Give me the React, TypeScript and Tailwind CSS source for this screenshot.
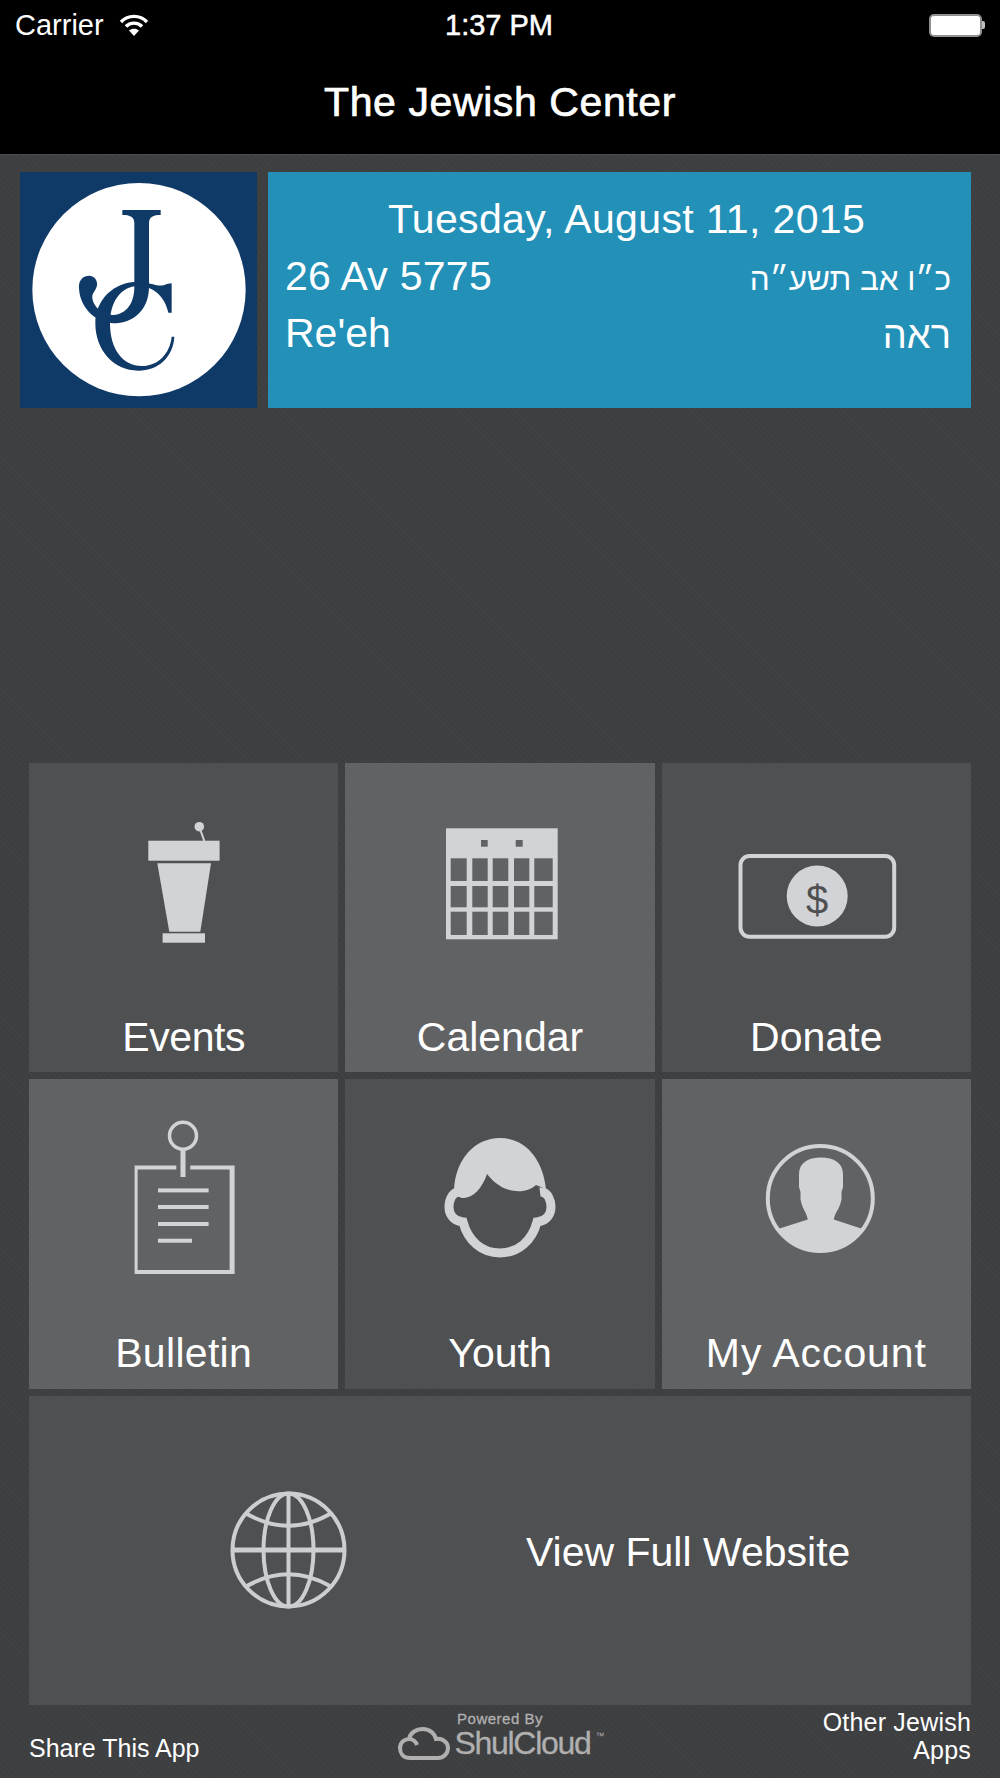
const ICON = "#d2d3d7";
const DARK = "#4f5052";
const LIGHT = "#616264";

function Podium() {
  return (
    <svg width="200" height="160" viewBox="0 0 200 160" fill={ICON}>
      <circle cx="115.3" cy="23.7" r="4.8" />
      <path d="M115.3 24 L120.3 38" stroke={ICON} strokeWidth="2" fill="none" />
      <rect x="64.3" y="37.7" width="71.3" height="20" />
      <path d="M73.3 60.3 H127 L116.3 128.7 H85.3 Z" />
      <rect x="78.6" y="130.3" width="42.4" height="9.4" />
    </svg>
  );
}

function CalendarIcon() {
  const xs = [[20.7, 16], [42.3, 15.4], [62.7, 15.6], [84, 15.3], [104.3, 18.4]];
  const ys = [[55.3, 22.7], [83, 21.3], [108.7, 23.3]];
  return (
    <svg width="200" height="160" viewBox="0 0 200 160">
      <g transform="translate(30 0)">
        <rect x="16" y="25.3" width="111.7" height="111" fill={ICON} />
        <rect x="51" y="37" width="6.7" height="6.7" fill={LIGHT} />
        <rect x="85.7" y="37" width="7" height="6.7" fill={LIGHT} />
        {ys.map(([y, h]) =>
          xs.map(([x, w]) => <rect key={`${x}-${y}`} x={x} y={y} width={w} height={h} fill={LIGHT} />),
        )}
      </g>
    </svg>
  );
}

function Bill() {
  return (
    <svg width="200" height="160" viewBox="0 0 200 160">
      <rect x="24.5" y="53" width="153.7" height="80.7" rx="9" fill="none" stroke={ICON} strokeWidth="4" />
      <circle cx="101.2" cy="93" r="30.5" fill={ICON} />
      <text x="101.2" y="111" textAnchor="middle" fontSize="40" fill={DARK} fontFamily="'Liberation Sans', sans-serif">
        $
      </text>
    </svg>
  );
}

function BulletinIcon() {
  return (
    <svg width="200" height="160" viewBox="0 0 200 160" fill={ICON}>
      <circle cx="99" cy="16.7" r="13.5" fill="none" stroke={ICON} strokeWidth="3.5" />
      <rect x="96.5" y="30" width="5" height="28" />
      <path d="M92.3 46.4 H50.6 V155 H150.6 V46.4 H106.3 V50.4 H145.6 V151 H53.6 V50.4 H92.3 Z" fillRule="evenodd" />
      <rect x="74" y="69.4" width="50.6" height="4" />
      <rect x="74" y="86" width="50.6" height="4" />
      <rect x="74" y="103" width="50.6" height="4" />
      <rect x="74" y="119.7" width="34" height="4" />
    </svg>
  );
}

function Face() {
  return (
    <svg width="200" height="160" viewBox="0 0 200 160">
      <path
        d="M60 73 C52 72 49 82 49 88 C49 96 54 102 63 103 C68 122 82 134 100 134 C118 134 132 122 137 103 C146 102 151 96 151 88 C151 82 148 72 140 73"
        fill="none"
        stroke={ICON}
        strokeWidth="9"
      />
      <path
        d="M54 72 C55 40 75 19 100 19 C125 19 143 40 146 70 L136 66 C128 74 105 78 87 55 C82 70 72 80 62 79 C58 78 55 76 54 72 Z"
        fill={ICON}
      />
    </svg>
  );
}

function Person() {
  return (
    <svg width="200" height="160" viewBox="0 0 200 160">
      <circle cx="104.3" cy="79.5" r="52.5" fill="none" stroke={ICON} strokeWidth="4" />
      <path
        d="M62 110 L91.8 100.5 C90.5 93 86 90 84.5 80 L84.5 73 L83 68 L83 55 C83 44 92 38.4 104.8 38.4 C118 38.4 127 44 127 55 L127 68 L125.5 73 L125.5 80 C124 90 119 93 117.8 100.5 L146.6 110 A52.7 52.7 0 0 1 62 110 Z"
        fill={ICON}
      />
    </svg>
  );
}

function Globe() {
  return (
    <svg width="120" height="120" viewBox="0 0 120 120" fill="none" stroke="#cdced1" strokeWidth="4">
      <ellipse cx="60.5" cy="60" rx="56" ry="56.5" />
      <ellipse cx="60.5" cy="60" rx="25" ry="56.5" />
      <path d="M60.5 3.5 V116.5" />
      <path d="M4.5 60 H116.5" strokeWidth="5" />
      <path d="M19 24 Q60.5 47.5 102 24" />
      <path d="M19 96 Q60.5 72.5 102 96" />
    </svg>
  );
}

function Logo() {
  return (
    <svg width="237" height="236" viewBox="30 36 711 708" className="shrink-0" role="img" aria-label="JC logo">
      <rect x="30" y="36" width="711" height="708" fill="#0f3a68" />
      <circle cx="387" cy="389" r="320" fill="#ffffff" />
      <path
        d="M337 150 L452 150 L452 165 C430 165 417 170 417 190 L417 380 C417 450 370 490 310 490 C265 490 210 450 207 385 C205 360 220 347 237 347 C255 347 265 365 260 380 C255 395 245 400 247 415 C250 435 265 450 280 458 L305 465 C340 465 373 440 373 380 L373 190 C373 170 360 165 337 165 Z"
        fill="#0f3a68"
      />
      <path
        d="M470 372 L485 370 L485 458 L475 458 C465 410 430 378 385 378 C330 378 300 430 300 490 C300 570 340 618 395 618 C445 618 480 580 485 530 L493 530 C490 590 445 632 385 632 C310 632 256 570 256 490 C256 420 310 365 385 365 C420 365 445 385 470 372 Z"
        fill="#0f3a68"
      />
    </svg>
  );
}

function Tile({
  label,
  light,
  labelClass,
  children,
}: {
  label: string;
  light?: boolean;
  labelClass: string;
  children: React.ReactNode;
}) {
  return (
    <div className={`flex flex-col items-center pt-[40px] pb-[12.5px] ${light ? "bg-[#616264]" : "bg-[#4f5052]"}`}>
      {children}
      <div className={`mt-auto text-[41px] leading-[46px] text-white ${labelClass}`}>{label}</div>
    </div>
  );
}

export default function App() {
  return (
    <div className="flex h-[1778px] w-[1000px] flex-col overflow-hidden bg-[#3e3f41] bg-[repeating-linear-gradient(45deg,#3d3e40_0px,#3d3e40_2px,#404143_2px,#404143_4px)] font-['Liberation_Sans',sans-serif] text-white">
      <header className="h-[155px] shrink-0 border-b border-[#4c4d4f] bg-black">
        <div className="relative flex h-[50px] items-center justify-between pl-[15px] pr-[15px]">
          <div className="flex items-center gap-[15px]">
            <span className="text-[29px] leading-[34px]">Carrier</span>
            <svg width="30" height="22" viewBox="0 0 30 22" fill="none" stroke="#ffffff" strokeWidth="3.4">
              <path d="M2 8 C9 0.5 21 0.5 28 8" />
              <path d="M7 12.5 C11 8 19 8 23 12.5" />
              <path d="M15 22 L10 16.5 C13 14 17 14 20 16.5 Z" fill="#ffffff" stroke="none" />
            </svg>
          </div>
          <span className="absolute left-[445px] text-[29px] leading-[34px] [-webkit-text-stroke:0.5px_white]">
            1:37 PM
          </span>
          <div className="flex items-center">
            <div className="h-[23px] w-[53px] rounded-[5px] border-2 border-[#8f8f8f] bg-white" />
            <div className="h-[8px] w-[3px] rounded-r-[2px] bg-[#bdbdbd]" />
          </div>
        </div>
        <div className="flex h-[104px] items-center justify-center text-[41px] leading-[48px] tracking-[0.6px] [-webkit-text-stroke:0.7px_white]">
          The Jewish Center
        </div>
      </header>

      <section className="mt-[17px] flex h-[236px] shrink-0 gap-[11px] pl-[20px] pr-[29px]">
        <Logo />
        <div className="flex-1 bg-[#2390b7] pl-[17px] pr-[20px] pt-[22px] text-[41px]">
          <div className="pl-[17px] text-center leading-[50px] tracking-[0.35px]">Tuesday, August 11, 2015</div>
          <div className="mt-[7px] flex h-[50px] items-start justify-between leading-[50px]">
            <span className="tracking-[0.25px]">26 Av 5775</span>
            <span className="pt-[3px] text-[31.5px]">כ״ו אב תשע״ה</span>
          </div>
          <div className="mt-[7px] flex h-[50px] items-start justify-between leading-[50px]">
            <span>Re'eh</span>
            <span className="pt-[2px] text-[38px]">ראה</span>
          </div>
        </div>
      </section>

      <section className="mt-[355px] grid h-[942px] shrink-0 grid-cols-3 grid-rows-3 gap-[7px] pl-[29px] pr-[29px]">
        <Tile label="Events" labelClass="tracking-[-0.4px]"><Podium /></Tile>
        <Tile label="Calendar" light labelClass="tracking-[0px]"><CalendarIcon /></Tile>
        <Tile label="Donate" labelClass="tracking-[0.1px]"><Bill /></Tile>
        <Tile label="Bulletin" light labelClass="tracking-[0.3px]"><BulletinIcon /></Tile>
        <Tile label="Youth" labelClass="tracking-[0px]"><Face /></Tile>
        <Tile label="My Account" light labelClass="tracking-[0.9px]"><Person /></Tile>
        <div className="col-span-3 flex items-center bg-[#4f5052] pl-[199px]">
          <Globe />
          <span className="ml-[178px] pt-[4px] text-[41px] leading-[46px]">View Full Website</span>
        </div>
      </section>

      <footer className="grid flex-1 grid-cols-3 items-end pl-[29px] pr-[29px] text-[25px] leading-[28px]">
        <div className="pb-[16px]">Share This App</div>
        <div className="flex flex-col items-center pb-[17px] text-[#b0b0b0]">
          <div className="mb-[3px] h-[14px] text-[15px] leading-[14px] tracking-[0.5px] [-webkit-text-stroke:0.3px_#b0b0b0]">Powered By</div>
          <div className="flex h-[32px] items-end gap-[5px] pl-[2px]">
            <svg width="52" height="34" viewBox="0 0 52 34" fill="none" stroke="#b0b0b0" strokeWidth="4" className="-mt-[2px] shrink-0">
              <path d="M12 31 C5 31 2 26 2 21 C2 15 7 12 11 12 C12 6 18 2 25 2 C32 2 37 7 38 12 C44 11 50 15 50 21 C50 27 45 31 40 31 Z" />
              <path d="M11 12 C15 12 18 15 19 18" />
            </svg>
            <span className="mb-[4px] text-[32px] leading-[28px] tracking-[-1.3px] [-webkit-text-stroke:0.3px_#b0b0b0]">ShulCloud</span>
            <span className="mb-[20px] text-[9px] leading-[9px]">™</span>
          </div>
        </div>
        <div className="pb-[14px] text-right tracking-[0.2px]">
          Other Jewish
          <br />
          Apps
        </div>
      </footer>
    </div>
  );
}
